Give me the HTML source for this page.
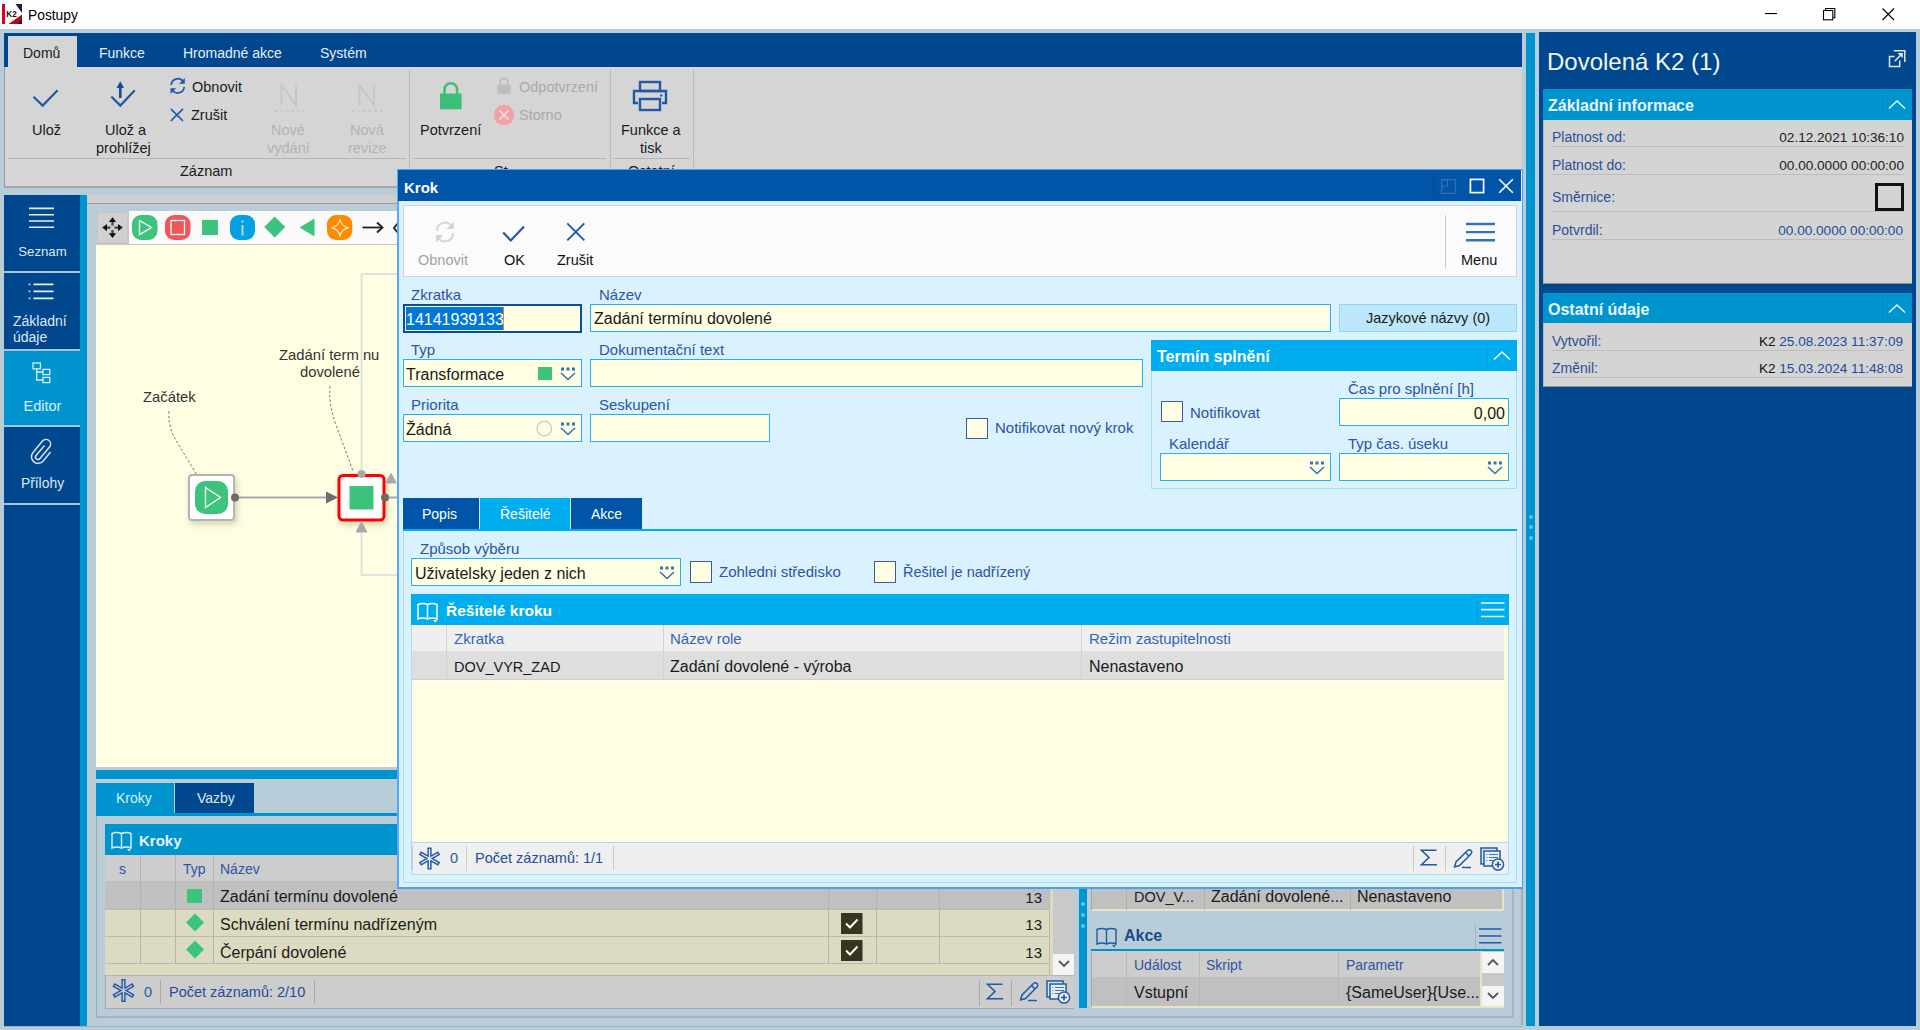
<!DOCTYPE html>
<html><head><meta charset="utf-8">
<style>
*{box-sizing:border-box;margin:0;padding:0}
html,body{width:1920px;height:1030px;overflow:hidden;background:#fff;font-family:"Liberation Sans",sans-serif;font-size:14px;color:#1a1a1a}
.a{position:absolute}
.t{position:absolute;white-space:nowrap;line-height:1}
svg{position:absolute;overflow:visible}
.lbl{color:#2f52a3;font-size:14px}
.inp{position:absolute;background:#fffee3;border:1px solid #1fb1f4}
.ws{color:#fff}
</style></head><body>
<!-- TITLE BAR -->
<div class="a" style="left:0;top:0;width:1920px;height:29px;background:#fff"></div>
<svg style="left:2px;top:4px" width="20" height="20" viewBox="0 0 20 20">
<rect x="0" y="0" width="20" height="20" fill="#fff"/>
<rect x="0" y="0" width="3" height="20" fill="#d0061e"/>
<path d="M13.5 0 H20 V9 Z" fill="#241a48"/>
<path d="M20 10.5 V20 H6.5 Z" fill="#b3091c"/>
<path d="M20 15 V20 H15 Z" fill="#4a0a20"/>
<text x="4.3" y="13.3" font-size="8.2" font-weight="bold" fill="#111" font-family="Liberation Sans">K2</text>
</svg>
<div class="t" style="left:28px;top:8.5px;font-size:13.8px;color:#000">Postupy</div>
<svg style="left:1765px;top:12.5px" width="12" height="2"><rect width="12" height="1.1" fill="#000"/></svg>
<svg style="left:1822px;top:7px" width="14" height="14" viewBox="0 0 14 14"><rect x="1.5" y="3.5" width="9.3" height="9.3" fill="none" stroke="#000" stroke-width="1.1"/><path d="M3.5 3.5 V1.5 H12.8 V10.8 H10.8" fill="none" stroke="#000" stroke-width="1.1"/></svg>
<svg style="left:1882px;top:8px" width="13" height="13" viewBox="0 0 13 13"><path d="M0.5 0.5 L12 12 M12 0.5 L0.5 12" stroke="#000" stroke-width="1.1"/></svg>

<!-- FRAME -->
<div class="a" style="left:0;top:29px;width:1920px;height:1001px;background:#b8cdd8"></div>

<!-- RIBBON -->
<div class="a" style="left:4px;top:33px;width:1518px;height:35px;background:#00478d"></div>
<div class="a" style="left:4px;top:67px;width:1518px;height:121px;background:#d5d5d5;border-left:1px solid #9a9a9a;border-bottom:2px solid #a0a6aa"></div>
<div class="a" style="left:8px;top:36px;width:69px;height:32px;background:#d5d5d5"></div>
<div class="t" style="left:23px;top:46px;font-size:14px;color:#1a1a1a">Domů</div>
<div class="t ws" style="left:99px;top:46px;font-size:14px;color:#e8eef5">Funkce</div>
<div class="t ws" style="left:183px;top:46px;font-size:14px;color:#e8eef5">Hromadné akce</div>
<div class="t ws" style="left:320px;top:46px;font-size:14px;color:#e8eef5">Systém</div>


<!-- RIBBON CONTENT -->
<svg style="left:32px;top:88px" width="28" height="20" viewBox="0 0 28 20"><path d="M1.5 8.8 L10.7 17.6 L25.6 2.3" fill="none" stroke="#1f5aa6" stroke-width="2.2"/></svg>
<div class="t" style="left:32px;top:123px;font-size:14.5px">Ulož</div>
<svg style="left:110px;top:80px" width="28" height="28" viewBox="0 0 28 28"><path d="M1.3 16.5 L10.3 25.6 L24.8 10.3" fill="none" stroke="#1f5aa6" stroke-width="2.2"/><path d="M10.3 18 V7" stroke="#0f4d9e" stroke-width="2.6"/><path d="M6.5 8 L10.3 1.2 L14.1 8 Z" fill="#0f4d9e"/></svg>
<div class="t" style="left:105px;top:123px;font-size:14.5px">Ulož a</div>
<div class="t" style="left:96px;top:141px;font-size:14.5px">prohlížej</div>
<svg style="left:169px;top:77px" width="18" height="18" viewBox="0 0 18 18"><path d="M2.2 8 A6.5 6.5 0 0 1 14 4.5" fill="none" stroke="#1f5aa6" stroke-width="1.8"/><path d="M15.8 1 V6.8 H10.2 Z" fill="#1f5aa6"/><path d="M15.2 10 A6.5 6.5 0 0 1 3.6 13.5" fill="none" stroke="#1f5aa6" stroke-width="1.8"/><path d="M1.5 17 V11.2 H7.1 Z" fill="#1f5aa6"/></svg>
<div class="t" style="left:192px;top:80px;font-size:14.5px">Obnovit</div>
<svg style="left:170px;top:108px" width="14" height="14" viewBox="0 0 14 14"><path d="M0.8 0.8 L13 13 M13 0.8 L0.8 13" stroke="#1f5aa6" stroke-width="1.7"/></svg>
<div class="t" style="left:191px;top:108px;font-size:14.5px">Zrušit</div>
<svg style="left:279px;top:84px" width="20" height="22" viewBox="0 0 20 22"><path d="M2.5 21 V1.5 L17 21 V1.5" fill="none" stroke="#c6c6c6" stroke-width="2"/></svg>
<svg style="left:275px;top:110px" width="30" height="2"><path d="M0 1 H30" stroke="#c3c3c3" stroke-width="1.6" stroke-dasharray="3 2.5"/></svg>
<div class="t" style="left:271px;top:123px;font-size:14.5px;color:#b3b3b3">Nové</div>
<div class="t" style="left:267px;top:141px;font-size:14.5px;color:#b3b3b3">vydání</div>
<svg style="left:357px;top:84px" width="20" height="22" viewBox="0 0 20 22"><path d="M2.5 21 V1.5 L17 21 V1.5" fill="none" stroke="#c6c6c6" stroke-width="2"/></svg>
<svg style="left:352px;top:110px" width="30" height="2"><path d="M0 1 H30" stroke="#c3c3c3" stroke-width="1.6" stroke-dasharray="3 2.5"/></svg>
<div class="t" style="left:350px;top:123px;font-size:14.5px;color:#b3b3b3">Nová</div>
<div class="t" style="left:348px;top:141px;font-size:14.5px;color:#b3b3b3">revize</div>
<div class="a" style="left:8px;top:158px;width:398px;height:1px;background:#b5b5b5"></div>
<div class="t" style="left:180px;top:164px;font-size:14.5px">Záznam</div>
<div class="a" style="left:409px;top:70px;width:1px;height:117px;background:#b8b8b8"></div>
<svg style="left:439px;top:81px" width="24" height="30" viewBox="0 0 24 30"><path d="M5.5 13 V8.5 A6.3 6.3 0 0 1 18.1 8.5 V13" fill="none" stroke="#3dbf78" stroke-width="2.6"/><rect x="1" y="12.5" width="21.6" height="15.8" fill="#3dbf78"/></svg>
<div class="t" style="left:420px;top:123px;font-size:14.5px">Potvrzení</div>
<svg style="left:496px;top:77px" width="16" height="18" viewBox="0 0 16 18"><path d="M4 8 V5.5 A4 4 0 0 1 12 5.5 V8" fill="none" stroke="#bdbdbd" stroke-width="1.8"/><rect x="1.3" y="7.5" width="13.4" height="9.6" fill="#bdbdbd"/></svg>
<div class="t" style="left:519px;top:80px;font-size:14.5px;color:#a9a9a9">Odpotvrzení</div>
<svg style="left:493px;top:104px" width="22" height="22" viewBox="0 0 22 22"><circle cx="11" cy="11" r="10.3" fill="#eea3a6"/><path d="M6.5 6.5 L15.5 15.5 M15.5 6.5 L6.5 15.5" stroke="#f7dcdd" stroke-width="1.6"/></svg>
<div class="t" style="left:519px;top:108px;font-size:14.5px;color:#a9a9a9">Storno</div>
<div class="a" style="left:413px;top:158px;width:193px;height:1px;background:#b5b5b5"></div>
<div class="t" style="left:494px;top:164px;font-size:14.5px">St</div>
<div class="a" style="left:610px;top:70px;width:1px;height:117px;background:#b8b8b8"></div>
<svg style="left:632px;top:80px" width="38" height="33" viewBox="0 0 38 33"><rect x="8" y="2" width="20" height="9" fill="none" stroke="#1f5aa6" stroke-width="2.4"/><path d="M6 23 H2 V11 H34 V23 H30" fill="none" stroke="#1f5aa6" stroke-width="2.4"/><rect x="8" y="19" width="20" height="11" fill="none" stroke="#1f5aa6" stroke-width="2.4"/><rect x="28" y="14.5" width="2.4" height="2" fill="#1f5aa6"/></svg>
<div class="t" style="left:621px;top:123px;font-size:14.5px">Funkce a</div>
<div class="t" style="left:640px;top:141px;font-size:14.5px">tisk</div>
<div class="a" style="left:613px;top:158px;width:77px;height:1px;background:#b5b5b5"></div>
<div class="t" style="left:628px;top:164px;font-size:14.5px">Ostatní</div>
<div class="a" style="left:693px;top:70px;width:1px;height:117px;background:#b8b8b8"></div>

<!-- LEFT NAV -->
<div class="a" style="left:4px;top:195px;width:76px;height:831px;background:#00478d"></div>
<div class="a" style="left:80px;top:195px;width:7px;height:831px;background:#0094cf"></div>

<!-- EDITOR AREA -->
<div class="a" style="left:87px;top:195px;width:1435px;height:9px;background:#cfcfcf;border-bottom:1px solid #9d9d9d"></div>


<!-- NAV ITEMS -->
<div class="a" style="left:4px;top:271px;width:76px;height:2px;background:#a9c3d6"></div>
<div class="a" style="left:4px;top:349px;width:76px;height:78px;background:#0094cf"></div>
<div class="a" style="left:4px;top:349px;width:76px;height:2px;background:#a9c3d6"></div>
<div class="a" style="left:4px;top:425px;width:76px;height:2px;background:#a9c3d6"></div>
<div class="a" style="left:4px;top:503px;width:76px;height:2px;background:#a9c3d6"></div>
<svg style="left:29px;top:206px" width="26" height="24" viewBox="0 0 26 24"><path d="M0 2.4 H25 M0 8.7 H25 M0 15 H25 M0 21.2 H25" stroke="#e6edf5" stroke-width="1.6"/></svg>
<div class="t" style="left:4px;width:77px;text-align:center;top:245.3px;font-size:13.2px;color:#dfe7f0">Seznam</div>
<svg style="left:28px;top:282px" width="27" height="20" viewBox="0 0 27 20"><path d="M5.5 2.4 H25.5 M5.5 9.4 H25.5 M5.5 16.4 H25.5" stroke="#e6edf5" stroke-width="1.6"/><rect x="0.7" y="1.6" width="1.6" height="1.6" fill="#e6edf5"/><rect x="0.7" y="8.6" width="1.6" height="1.6" fill="#e6edf5"/><rect x="0.7" y="15.6" width="1.6" height="1.6" fill="#e6edf5"/></svg>
<div class="t" style="left:13px;top:314px;font-size:14px;color:#dfe7f0">Základní</div>
<div class="t" style="left:13px;top:330px;font-size:14px;color:#dfe7f0">údaje</div>
<svg style="left:32px;top:362px" width="19" height="22" viewBox="0 0 19 22"><rect x="1" y="1" width="7.4" height="5.8" fill="none" stroke="#d8eef8" stroke-width="1.3"/><rect x="11" y="7.4" width="6.8" height="5.2" fill="none" stroke="#d8eef8" stroke-width="1.3"/><rect x="11" y="15.4" width="6.8" height="5.2" fill="none" stroke="#d8eef8" stroke-width="1.3"/><path d="M4.7 6.8 V18 H11 M4.7 10 H11" fill="none" stroke="#d8eef8" stroke-width="1.3"/></svg>
<div class="t" style="left:4px;width:77px;text-align:center;top:399px;font-size:14.5px;color:#dff0f8">Editor</div>
<svg style="left:30px;top:438px" width="24" height="26" viewBox="0 0 24 26"><path d="M14.5 7.5 L6 17.5 A2.5 2.5 0 0 0 10 20.5 L19.5 9 A4.6 4.6 0 0 0 12.5 3 L3 14.5 A6.6 6.6 0 0 0 13.2 23 L20.5 14" fill="none" stroke="#d6e2ee" stroke-width="1.5"/></svg>
<div class="t" style="left:4px;width:77px;text-align:center;top:476.5px;font-size:13.9px;color:#dfe7f0">Přílohy</div>

<!-- EDITOR TOOLBAR & CANVAS -->
<div class="a" style="left:96px;top:211px;width:302px;height:34px;background:#fafafa;border-bottom:1px solid #c8c8c8"></div>
<div class="a" style="left:96px;top:211px;width:33px;height:33px;background:#c7c7c7"></div>
<div class="a" style="left:98px;top:213px;width:29px;height:29px;background:#d0d0d0"></div>
<svg style="left:101px;top:216px" width="24" height="24" viewBox="0 0 24 24"><path d="M11.5 5 V9.5 M11.5 14 V18 M5 11.6 H9.5 M13.5 11.6 H18" stroke="#444" stroke-width="2.3"/><path d="M7.8 6 L11.5 1.2 L15.2 6 Z M7.8 17.2 L11.5 22 L15.2 17.2 Z M6 7.9 L1.2 11.6 L6 15.3 Z M17 7.9 L21.8 11.6 L17 15.3 Z" fill="#111"/></svg>
<svg style="left:132px;top:215px" width="26" height="26" viewBox="0 0 26 26"><rect x="0" y="0" width="25.5" height="25" rx="9" fill="#3dc47c"/><path d="M7.5 5.5 L19.5 12.5 L7.5 19.5 Z" fill="none" stroke="#fff" stroke-width="1.4"/></svg>
<svg style="left:165px;top:215px" width="26" height="26" viewBox="0 0 26 26"><rect x="0" y="0" width="25.5" height="25" rx="9" fill="#f45556"/><rect x="6" y="5.5" width="13.5" height="14" fill="#f45556" stroke="#fff" stroke-width="1.3"/></svg>
<div class="a" style="left:202px;top:220px;width:16px;height:15px;background:#3dc47c"></div>
<svg style="left:230px;top:215px" width="26" height="26" viewBox="0 0 26 26"><rect x="0" y="0" width="25" height="25" rx="9" fill="#03a0e3"/><rect x="11.5" y="5.5" width="2" height="2" fill="#a9defa"/><rect x="11.5" y="10" width="2" height="10.5" fill="#a9defa"/></svg>
<svg style="left:264px;top:216px" width="22" height="22" viewBox="0 0 22 22"><path d="M10.7 0.5 L21.3 11 L10.7 21.5 L0.2 11 Z" fill="#3dc47c"/></svg>
<svg style="left:299px;top:218px" width="17" height="19" viewBox="0 0 17 19"><path d="M15.5 0.5 V18.5 L0.5 9.5 Z" fill="#3dc47c"/></svg>
<svg style="left:327px;top:215px" width="26" height="26" viewBox="0 0 26 26"><rect x="0" y="0" width="25.3" height="25" rx="9" fill="#ff8a00"/><path d="M13 4 C13.5 8.5, 17 12, 21.7 12.8 C17 13.6, 13.5 17, 13 21.5 C12.5 17, 9 13.6, 4.3 12.8 C9 12, 12.5 8.5, 13 4 Z" fill="none" stroke="#ffe9d2" stroke-width="1.3"/></svg>
<svg style="left:362px;top:221px" width="22" height="13" viewBox="0 0 22 13"><path d="M0.5 6.5 H20" stroke="#222" stroke-width="1.8"/><path d="M15 1.5 L20.5 6.5 L15 11.5" fill="none" stroke="#222" stroke-width="1.9"/></svg>
<svg style="left:393px;top:222px" width="6" height="12" viewBox="0 0 6 12"><path d="M5 1 L1 6 L5 11" fill="none" stroke="#222" stroke-width="1.9"/></svg>
<div class="a" style="left:96px;top:245px;width:302px;height:522px;background:#fffee3"></div>
<!-- diagram -->
<svg style="left:96px;top:245px" width="302" height="522" viewBox="96 245 302 522">
<path d="M361.5 274 H398 M361.5 274 V470 M361.5 532 V575 H398" fill="none" stroke="#e2e2dc" stroke-width="2"/>
<path d="M169 411 C168 425, 172 432, 174 437 L197 475" fill="none" stroke="#777" stroke-width="1" stroke-dasharray="2.5 2"/>
<path d="M330 386 C329 400, 331 410, 336 425 L353 471" fill="none" stroke="#777" stroke-width="1" stroke-dasharray="2.5 2"/>
<rect x="189" y="475" width="45" height="45" rx="3" fill="#fff" stroke="#b4b4b4" stroke-width="2" style="filter:drop-shadow(2px 3px 3px rgba(120,120,80,0.35))"/>
<rect x="195" y="481" width="33" height="33" rx="10" fill="#3dc47c"/>
<path d="M205.5 487.5 L220.5 497.5 L205.5 507.5 Z" fill="none" stroke="#fff" stroke-width="1.4"/>
<path d="M239 497.5 H327" stroke="#a9a9a9" stroke-width="2"/>
<circle cx="235" cy="497.5" r="4" fill="#6b6b6b"/>
<path d="M326 491.5 L338 497.5 L326 503.5 Z" fill="#6b6b6b"/>
<rect x="339" y="475.5" width="45" height="44.5" rx="4" fill="#fff" stroke="#ff0000" stroke-width="3" style="filter:drop-shadow(2px 3px 3px rgba(120,120,80,0.35))"/>
<rect x="349.5" y="486" width="24" height="23.5" fill="#3dc47c"/>
<circle cx="361.5" cy="474" r="4" fill="#a9a9a9"/>
<circle cx="385" cy="497.5" r="4" fill="#6b6b6b"/>
<path d="M389 497.5 H398" stroke="#a9a9a9" stroke-width="2"/>
<path d="M385 483.5 L391 472.5 L397 483.5 Z" fill="#a9a9a9"/>
<path d="M355.5 532.5 L361.5 520.5 L367.5 532.5 Z" fill="#a9a9a9"/>
</svg>
<div class="t" style="left:143px;top:390px;font-size:14.8px;color:#333">Začátek</div>
<div class="t" style="left:279px;top:348px;font-size:14.8px;color:#333">Zadání term nu</div>
<div class="t" style="left:300px;top:365px;font-size:14.8px;color:#333">dovolené</div>

<!-- RIGHT SPLIT BAR -->
<div class="a" style="left:1526px;top:33px;width:9px;height:993px;background:#0094cf"></div>

<div class="a" style="left:1528.5px;top:514.5px;width:4px;height:4px;border-radius:50%;background:#4fc8f5"></div>
<div class="a" style="left:1528.5px;top:525px;width:4px;height:4px;border-radius:50%;background:#4fc8f5"></div>
<div class="a" style="left:1528.5px;top:535.5px;width:4px;height:4px;border-radius:50%;background:#4fc8f5"></div>
<!-- RIGHT PANEL -->
<div class="a" style="left:1539px;top:32px;width:377px;height:994px;background:#00478d"></div>


<!-- BOTTOM AREA -->
<div class="a" style="left:96px;top:770px;width:1426px;height:9px;background:#0094cf"></div>
<div class="a" style="left:96px;top:783px;width:78px;height:32px;background:#0094cf"></div>
<div class="a" style="left:175px;top:783px;width:79px;height:32px;background:#00478d"></div>
<div class="t" style="left:116px;top:791px;font-size:14px;color:#d8eef8">Kroky</div>
<div class="t" style="left:197px;top:791px;font-size:14px;color:#dce6f0">Vazby</div>
<div class="a" style="left:96px;top:813px;width:1426px;height:3px;background:#0094cf"></div>
<div class="a" style="left:96px;top:816px;width:1418px;height:202px;border-left:1px solid #9aa8b0;border-right:2px solid #a7b4bb;border-bottom:2px solid #a7b4bb"></div>
<div class="a" style="left:4px;top:1026px;width:1518px;height:1px;background:#a3afb5"></div>
<!-- Kroky grid -->
<div class="a" style="left:105px;top:824px;width:969px;height:31px;background:#0094cf"></div>
<svg style="left:111px;top:831px" width="22" height="21" viewBox="0 0 22 21"><path d="M1 2.5 C4 1.2, 7.5 1.2, 10.5 2.5 V17 C7.5 15.8, 4 15.8, 1 17 Z M10.5 2.5 C13.5 1.2, 17 1.2, 20 2.5 V17 C17 15.8, 13.5 15.8, 10.5 17" fill="none" stroke="#dff2fa" stroke-width="1.4"/><path d="M16 18 L20 18 L18 20.5 Z" fill="#dff2fa"/></svg>
<div class="t" style="left:139px;top:833px;font-size:15px;font-weight:bold;color:#e6f4fa">Kroky</div>
<div class="a" style="left:105px;top:855px;width:945px;height:26px;background:#cdcdcd"></div>
<div class="a" style="left:105px;top:881px;width:945px;height:29px;background:#c0c0c0"></div>
<div class="a" style="left:105px;top:910px;width:945px;height:65px;background:#dcdac0"></div>
<div class="a" style="left:105px;top:909px;width:945px;height:1px;background:#b9b9ad"></div>
<div class="a" style="left:105px;top:936px;width:945px;height:1px;background:#b9b9ad"></div>
<div class="a" style="left:105px;top:963px;width:945px;height:1px;background:#b9b9ad"></div>
<div class="a" style="left:140px;top:855px;width:1px;height:109px;background:#b3b3b3"></div>
<div class="a" style="left:175px;top:855px;width:1px;height:109px;background:#b3b3b3"></div>
<div class="a" style="left:213px;top:855px;width:1px;height:109px;background:#b3b3b3"></div>
<div class="a" style="left:828px;top:881px;width:1px;height:83px;background:#b3b3b3"></div>
<div class="a" style="left:876px;top:881px;width:1px;height:83px;background:#b3b3b3"></div>
<div class="a" style="left:939px;top:881px;width:1px;height:83px;background:#b3b3b3"></div>
<div class="t lbl" style="left:119px;top:862px;font-size:14px">s</div>
<div class="t lbl" style="left:183px;top:862px;font-size:14px">Typ</div>
<div class="t lbl" style="left:220px;top:862px;font-size:14px">Název</div>
<div class="a" style="left:187px;top:889px;width:15px;height:14px;background:#3dc47c"></div>
<svg style="left:185px;top:913px" width="20" height="20" viewBox="0 0 20 20"><path d="M10 0.5 L19 9.5 L10 18.5 L1 9.5 Z" fill="#3dc47c"/></svg>
<svg style="left:185px;top:940px" width="20" height="20" viewBox="0 0 20 20"><path d="M10 0.5 L19 9.5 L10 18.5 L1 9.5 Z" fill="#3dc47c"/></svg>
<div class="t" style="left:220px;top:889px;font-size:16px;color:#1a1a1a">Zadání termínu dovolené</div>
<div class="t" style="left:220px;top:917px;font-size:16px;color:#1a1a1a">Schválení termínu nadřízeným</div>
<div class="t" style="left:220px;top:945px;font-size:16px;color:#1a1a1a">Čerpání dovolené</div>
<svg style="left:841px;top:913px" width="22" height="21" viewBox="0 0 22 21"><rect width="21.5" height="21" fill="#38341f"/><path d="M5 10.5 L9 14.5 L16.5 6.5" fill="none" stroke="#fff" stroke-width="2"/></svg>
<svg style="left:841px;top:940px" width="22" height="21" viewBox="0 0 22 21"><rect width="21.5" height="21" fill="#38341f"/><path d="M5 10.5 L9 14.5 L16.5 6.5" fill="none" stroke="#fff" stroke-width="2"/></svg>
<div class="t" style="right:878px;top:890px;font-size:15px">13</div>
<div class="t" style="right:878px;top:917px;font-size:15px">13</div>
<div class="t" style="right:878px;top:945px;font-size:15px">13</div>
<div class="a" style="left:1049px;top:855px;width:4px;height:120px;background:#dcdac0;border-left:1px solid #b9b9ad"></div>
<div class="a" style="left:1053px;top:882px;width:21px;height:29px;background:#d2d2d2;border-left:1px solid #f4f4f4;border-right:1px solid #e8e8e8"></div>
<div class="a" style="left:1053px;top:855px;width:21px;height:120px;background:#c9c9c9"></div>
<div class="a" style="left:1053px;top:954px;width:21px;height:21px;background:#f4f4f4"></div>
<svg style="left:1057px;top:959px" width="14" height="10" viewBox="0 0 14 10"><path d="M2 2 L7 7 L12 2" fill="none" stroke="#555" stroke-width="1.8"/></svg>
<div class="a" style="left:105px;top:975px;width:969px;height:34px;background:#cdcdcd;border-top:1px solid #b0b8bc;border-left:1px solid #a0a0a0;border-bottom:1px solid #9fabb1"></div>
<svg style="left:113px;top:980px" width="21" height="21" viewBox="0 0 21 21"><path d="M10.5 1 V20 M2.3 5.75 L18.7 15.25 M2.3 15.25 L18.7 5.75" stroke="#1f5aa6" stroke-width="4.2" stroke-linecap="square"/><path d="M10.5 1 V20 M2.3 5.75 L18.7 15.25 M2.3 15.25 L18.7 5.75" stroke="#cdcdcd" stroke-width="1.4" stroke-linecap="round"/></svg>
<div class="t" style="left:144px;top:985px;font-size:14.5px;color:#1f5aa6">0</div>
<div class="a" style="left:160px;top:980px;width:1px;height:24px;background:#aaa"></div>
<div class="t" style="left:169px;top:985px;font-size:14.5px;color:#1f4c9c">Počet záznamů: 2/10</div>
<div class="a" style="left:314px;top:980px;width:1px;height:24px;background:#aaa"></div>
<div class="a" style="left:979px;top:980px;width:1px;height:26px;background:#aaa"></div>
<div class="a" style="left:1011px;top:980px;width:1px;height:26px;background:#aaa"></div>
<svg style="left:986px;top:983px" width="18" height="18" viewBox="0 0 18 18"><path d="M16.5 1.3 H1.5 L9 8.5 L1.5 15.8 H17" fill="none" stroke="#1f5aa6" stroke-width="1.6" stroke-linejoin="miter"/></svg>
<svg style="left:1019px;top:982px" width="20" height="20" viewBox="0 0 20 20"><path d="M1.5 18 L3 13 L14.5 1.5 A2 2 0 0 1 18 5 L6.5 16.5 Z M12.5 3.5 L16 7" fill="none" stroke="#1f5aa6" stroke-width="1.5"/><path d="M9 18.5 H18" stroke="#1f5aa6" stroke-width="1.5"/></svg>
<svg style="left:1046px;top:980px" width="26" height="26" viewBox="0 0 26 26"><rect x="1" y="1" width="16" height="16" fill="#d9e6f4" stroke="#1f5aa6" stroke-width="1.5"/><rect x="4" y="4" width="16" height="15" fill="#e8eef5" stroke="#1f5aa6" stroke-width="1.5"/><path d="M9 7.5 H18 M9 10.5 H18 M9 13.5 H13" stroke="#3f76b9" stroke-width="1.2"/><path d="M6.5 7.5 H7.5 M6.5 10.5 H7.5 M6.5 13.5 H7.5" stroke="#3f76b9" stroke-width="1.2"/><circle cx="18" cy="17.5" r="5.6" fill="#eef2f6" stroke="#1f5aa6" stroke-width="1.5"/><path d="M18 14.5 V20.5 M15 17.5 H21" stroke="#1f5aa6" stroke-width="1.7"/></svg>
<!-- vertical splitter -->
<div class="a" style="left:1079px;top:824px;width:8px;height:184px;background:#0094cf"></div>
<div class="a" style="left:1081px;top:902px;width:4px;height:4px;border-radius:50%;background:#52cbf7"></div>
<div class="a" style="left:1081px;top:913px;width:4px;height:4px;border-radius:50%;background:#52cbf7"></div>
<div class="a" style="left:1081px;top:924px;width:4px;height:4px;border-radius:50%;background:#52cbf7"></div>
<!-- right upper grid (Resitele) -->
<div class="a" style="left:1091px;top:870px;width:413px;height:41px;background:#c0c0c0;border-left:1px solid #a6a6a6;border-bottom:2px solid #e6e3c8;border-right:2px solid #e6e3c8"></div>
<div class="a" style="left:1126px;top:870px;width:1px;height:40px;background:#b0b0b0"></div>
<div class="a" style="left:1204px;top:870px;width:1px;height:40px;background:#b0b0b0"></div>
<div class="a" style="left:1350px;top:870px;width:1px;height:40px;background:#b0b0b0"></div>
<div class="t" style="left:1134px;top:890px;font-size:14.5px">DOV_V...</div>
<div class="t" style="left:1211px;top:889px;font-size:16px">Zadání dovolené...</div>
<div class="t" style="left:1357px;top:889px;font-size:16px">Nenastaveno</div>
<!-- Akce -->
<svg style="left:1096px;top:927px" width="22" height="21" viewBox="0 0 22 21"><path d="M1 2.5 C4 1.2, 7.5 1.2, 10.5 2.5 V17 C7.5 15.8, 4 15.8, 1 17 Z M10.5 2.5 C13.5 1.2, 17 1.2, 20 2.5 V17 C17 15.8, 13.5 15.8, 10.5 17" fill="none" stroke="#1f5aa6" stroke-width="1.4"/><path d="M16 18 L20 18 L18 20.5 Z" fill="#1f5aa6"/></svg>
<div class="t" style="left:1124px;top:927.5px;font-size:16px;font-weight:bold;color:#1a4a8e">Akce</div>
<div class="a" style="left:1475px;top:924px;width:1px;height:25px;background:#9fb4c2"></div>
<svg style="left:1479px;top:927px" width="23" height="18" viewBox="0 0 23 18"><path d="M0 2 H22.5 M0 9 H22.5 M0 15.8 H22.5" stroke="#1f5aa6" stroke-width="1.6"/></svg>
<div class="a" style="left:1091px;top:949px;width:413px;height:2px;background:#0094cf"></div>
<div class="a" style="left:1091px;top:951px;width:413px;height:57px;background:#cdcdcd;border-left:1px solid #a6a6a6;border-bottom:2px solid #e6e3c8"></div>
<div class="a" style="left:1092px;top:977px;width:390px;height:29px;background:#c0c0c0"></div>
<div class="a" style="left:1126px;top:951px;width:1px;height:55px;background:#b8b8b8"></div>
<div class="a" style="left:1199px;top:951px;width:1px;height:55px;background:#b8b8b8"></div>
<div class="a" style="left:1338px;top:951px;width:1px;height:55px;background:#b8b8b8"></div>
<div class="t lbl" style="left:1134px;top:958px;font-size:14px">Událost</div>
<div class="t lbl" style="left:1206px;top:958px;font-size:14px">Skript</div>
<div class="t lbl" style="left:1346px;top:958px;font-size:14px">Parametr</div>
<div class="t" style="left:1134px;top:985px;font-size:16px">Vstupní</div>
<div class="t" style="left:1346px;top:985px;font-size:16px">{SameUser}{Use...</div>
<div class="a" style="left:1480px;top:951px;width:2px;height:55px;background:#e6e3c8"></div>
<div class="a" style="left:1482px;top:951px;width:22px;height:55px;background:#c9c9c9"></div>
<div class="a" style="left:1482px;top:952px;width:22px;height:21px;background:#f4f4f4"></div>
<div class="a" style="left:1482px;top:986px;width:22px;height:20px;background:#f4f4f4"></div>
<svg style="left:1486px;top:957px" width="14" height="10" viewBox="0 0 14 10"><path d="M2 8 L7 3 L12 8" fill="none" stroke="#555" stroke-width="1.8"/></svg>
<svg style="left:1486px;top:991px" width="14" height="10" viewBox="0 0 14 10"><path d="M2 2 L7 7 L12 2" fill="none" stroke="#555" stroke-width="1.8"/></svg>

<!-- RIGHT INFO PANEL CONTENT -->
<div class="t" style="left:1547px;top:50px;font-size:24px;color:#f2f6fa">Dovolená K2 (1)</div>
<svg style="left:1880px;top:45px" width="30" height="26" viewBox="1880 45 30 26"><path d="M1894.5 56.5 H1889.5 V66.5 H1899.7 V60.5" fill="none" stroke="#e2e8ef" stroke-width="1.5"/><path d="M1893.8 50.7 H1904.8 V62" fill="none" stroke="#e2e8ef" stroke-width="1.5"/><path d="M1894.7 61.2 L1902 53.8" stroke="#e2e8ef" stroke-width="1.5"/><path d="M1897.5 53 H1902.8 V58.3 Z" fill="#e2e8ef"/></svg>
<div class="a" style="left:1543px;top:89px;width:369px;height:31px;background:#0094cf"></div>
<div class="t" style="left:1548px;top:98px;font-size:16px;font-weight:bold;color:#eaf5fb">Základní informace</div>
<div class="a" style="left:1882px;top:92px;width:1px;height:26px;background:#0a86bd"></div>
<svg style="left:1888px;top:99px" width="18" height="11" viewBox="0 0 18 11"><path d="M1 9.5 L9 2 L17 9.5" fill="none" stroke="#e8f4fa" stroke-width="1.5"/></svg>
<div class="a" style="left:1543px;top:120px;width:369px;height:164px;background:#d4d4d4;border-bottom:1px solid #8f8f8f;border-left:1px solid #b9b9b9"></div>
<div class="a" style="left:1551px;top:146px;width:353px;height:1px;background:#bdbdbd"></div>
<div class="a" style="left:1551px;top:174px;width:353px;height:1px;background:#bdbdbd"></div>
<div class="a" style="left:1551px;top:211px;width:353px;height:1px;background:#bdbdbd"></div>
<div class="a" style="left:1551px;top:239px;width:353px;height:1px;background:#bdbdbd"></div>
<div class="t lbl" style="left:1552px;top:130px;font-size:14px;color:#2a4f96">Platnost od:</div>
<div class="t lbl" style="left:1552px;top:158px;font-size:14px;color:#2a4f96">Platnost do:</div>
<div class="t lbl" style="left:1552px;top:190px;font-size:14px;color:#2a4f96">Směrnice:</div>
<div class="t lbl" style="left:1552px;top:223px;font-size:14px;color:#2a4f96">Potvrdil:</div>
<div class="t" style="right:16px;top:131px;font-size:13.6px;color:#222">02.12.2021 10:36:10</div>
<div class="t" style="right:16px;top:159px;font-size:13.6px;color:#222">00.00.0000 00:00:00</div>
<div class="a" style="left:1875px;top:183px;width:29px;height:28px;border:3.5px solid #111"></div>
<div class="t" style="right:17px;top:224px;font-size:13.6px;color:#1f4c9c">00.00.0000 00:00:00</div>
<div class="a" style="left:1543px;top:293px;width:369px;height:30px;background:#0094cf"></div>
<div class="t" style="left:1548px;top:302px;font-size:16px;font-weight:bold;color:#eaf5fb">Ostatní údaje</div>
<div class="a" style="left:1882px;top:296px;width:1px;height:26px;background:#0a86bd"></div>
<svg style="left:1888px;top:303px" width="18" height="11" viewBox="0 0 18 11"><path d="M1 9.5 L9 2 L17 9.5" fill="none" stroke="#e8f4fa" stroke-width="1.5"/></svg>
<div class="a" style="left:1543px;top:323px;width:369px;height:64px;background:#d4d4d4;border-bottom:1px solid #8f8f8f;border-left:1px solid #b9b9b9"></div>
<div class="a" style="left:1551px;top:350px;width:353px;height:1px;background:#bdbdbd"></div>
<div class="a" style="left:1551px;top:377px;width:353px;height:1px;background:#bdbdbd"></div>
<div class="t lbl" style="left:1552px;top:334px;font-size:14px;color:#2a4f96">Vytvořil:</div>
<div class="t lbl" style="left:1552px;top:361px;font-size:14px;color:#2a4f96">Změnil:</div>
<div class="t" style="right:17px;top:335px;font-size:13.6px;color:#111">K2 <span style="color:#1f4c9c">25.08.2023 11:37:09</span></div>
<div class="t" style="right:17px;top:362px;font-size:13.6px;color:#111">K2 <span style="color:#1f4c9c">15.03.2024 11:48:08</span></div>

<!-- DIALOG -->
<div class="a" style="left:1521px;top:187px;width:2px;height:838px;background:#a4adb3"></div>
<div class="a" style="left:397px;top:169px;width:1126px;height:720px;background:#d9f2fd;border:1px solid #4a9ef8;border-left:2px solid #55a9fb;border-bottom:2px solid #4a9ef8"></div>
<div class="a" style="left:398px;top:170px;width:1123px;height:31px;background:#0055a8"></div>
<div class="t" style="left:404px;top:180px;font-size:15px;font-weight:bold;color:#fff">Krok</div>
<div class="a" style="left:1433px;top:173px;width:1px;height:26px;background:#0a4b94"></div>
<svg style="left:1441px;top:179px" width="15" height="15" viewBox="0 0 15 15"><rect x="0.7" y="0.7" width="13.6" height="13.6" fill="none" stroke="#3a6fb0" stroke-width="1.2"/><path d="M0.7 7 H6.5 V0.7" fill="none" stroke="#3a6fb0" stroke-width="1.2"/></svg>
<svg style="left:1469px;top:178px" width="16" height="16" viewBox="0 0 16 16"><rect x="1.4" y="1.4" width="13.2" height="13.2" fill="none" stroke="#fff" stroke-width="1.7"/></svg>
<svg style="left:1498px;top:178px" width="16" height="16" viewBox="0 0 16 16"><path d="M1.2 1.2 L14.8 14.8 M14.8 1.2 L1.2 14.8" stroke="#fff" stroke-width="1.6"/></svg>
<!-- toolbar -->
<div class="a" style="left:403px;top:205px;width:1114px;height:72px;background:#fbfbfb;border:1px solid #d2d2d2"></div>
<svg style="left:434px;top:220px" width="22" height="24" viewBox="0 0 22 24"><path d="M3 11 A8 8 0 0 1 17.5 6" fill="none" stroke="#d4d4d4" stroke-width="2"/><path d="M20 1.5 V9 H12.5 Z" fill="#d4d4d4"/><path d="M19 13 A8 8 0 0 1 4.5 18" fill="none" stroke="#d4d4d4" stroke-width="2"/><path d="M2 22.5 V15 H9.5 Z" fill="#d4d4d4"/></svg>
<div class="t" style="left:418px;top:253px;font-size:14.5px;color:#a3a3a3">Obnovit</div>
<svg style="left:502px;top:225px" width="24" height="18" viewBox="0 0 24 18"><path d="M1.2 7.5 L8.8 15.5 L22 1.5" fill="none" stroke="#1f5aa6" stroke-width="2.2"/></svg>
<div class="t" style="left:504px;top:253px;font-size:14.5px;color:#111">OK</div>
<svg style="left:566px;top:222px" width="20" height="20" viewBox="0 0 20 20"><path d="M1.3 1.3 L18.3 18.3 M18.3 1.3 L1.3 18.3" stroke="#1f5aa6" stroke-width="1.9"/></svg>
<div class="t" style="left:557px;top:253px;font-size:14.5px;color:#111">Zrušit</div>
<div class="a" style="left:1445px;top:215px;width:1px;height:53px;background:#cdcdcd"></div>
<svg style="left:1466px;top:222px" width="30" height="20" viewBox="0 0 30 20"><path d="M0 2 H29 M0 10.1 H29 M0 18.2 H29" stroke="#3573b9" stroke-width="2.4"/></svg>
<div class="t" style="left:1461px;top:253px;font-size:14.5px;color:#111">Menu</div>
<!-- form -->
<div class="t lbl" style="left:411px;top:287px;font-size:15px">Zkratka</div>
<div class="t lbl" style="left:599px;top:287px;font-size:15px">Název</div>
<div class="a" style="left:403px;top:304px;width:179px;height:29px;background:#fffee3;border:2px solid #0a4e9e"></div>
<div class="a" style="left:406px;top:307px;width:97px;height:23px;background:#0078d7"></div>
<div class="a" style="left:503px;top:307px;width:1px;height:23px;background:#e0802a"></div>
<div class="t" style="left:406px;top:312px;font-size:16px;color:#fff">14141939133</div>
<div class="inp" style="left:590px;top:304px;width:741px;height:28px"></div>
<div class="t" style="left:594px;top:311px;font-size:16px">Zadání termínu dovolené</div>
<div class="a" style="left:1339px;top:304px;width:178px;height:28px;background:#bde8fb;border:1px solid #8fd5f7"></div>
<div class="t" style="left:1366px;top:311px;font-size:14.5px">Jazykové názvy (0)</div>
<div class="t lbl" style="left:411px;top:342px;font-size:15px">Typ</div>
<div class="t lbl" style="left:599px;top:342px;font-size:15px">Dokumentační text</div>
<div class="inp" style="left:403px;top:359px;width:179px;height:28px"></div>
<div class="t" style="left:406px;top:367px;font-size:16px">Transformace</div>
<div class="a" style="left:538px;top:367px;width:14px;height:13px;background:#3dc47c"></div>
<svg class="dd" style="left:560px;top:367px" width="16" height="14" viewBox="0 0 16 14"><rect x="1" y="0.5" width="3" height="3" fill="#3573b9"/><rect x="6.5" y="0.5" width="3" height="3" fill="#3573b9"/><rect x="12" y="0.5" width="3" height="3" fill="#3573b9"/><path d="M1 6 L8 12.5 L15 6" fill="none" stroke="#3573b9" stroke-width="1.6"/></svg>
<div class="inp" style="left:590px;top:359px;width:553px;height:28px"></div>
<div class="t lbl" style="left:411px;top:397px;font-size:15px">Priorita</div>
<div class="t lbl" style="left:599px;top:397px;font-size:15px">Seskupení</div>
<div class="inp" style="left:403px;top:414px;width:179px;height:28px"></div>
<div class="t" style="left:406px;top:422px;font-size:16px">Žádná</div>
<svg style="left:536px;top:420px" width="17" height="17" viewBox="0 0 17 17"><circle cx="8.3" cy="8.5" r="7.3" fill="none" stroke="#cfcfcf" stroke-width="1.5"/></svg>
<svg style="left:560px;top:422px" width="16" height="14" viewBox="0 0 16 14"><rect x="1" y="0.5" width="3" height="3" fill="#3573b9"/><rect x="6.5" y="0.5" width="3" height="3" fill="#3573b9"/><rect x="12" y="0.5" width="3" height="3" fill="#3573b9"/><path d="M1 6 L8 12.5 L15 6" fill="none" stroke="#3573b9" stroke-width="1.6"/></svg>
<div class="inp" style="left:590px;top:414px;width:180px;height:28px"></div>
<div class="a" style="left:966px;top:418px;width:22px;height:21px;background:#fffee3;border:1.5px solid #3a5b9c"></div>
<div class="t lbl" style="left:995px;top:420px;font-size:15px">Notifikovat nový krok</div>
<!-- Termin splneni -->
<div class="a" style="left:1151px;top:340px;width:366px;height:149px;border:1px solid #a3def8"></div>
<div class="a" style="left:1151px;top:340px;width:366px;height:31px;background:#00adef"></div>
<div class="t" style="left:1157px;top:349px;font-size:16px;font-weight:bold;color:#fff">Termín splnění</div>
<div class="a" style="left:1486px;top:343px;width:1px;height:27px;background:#0a9ad6"></div>
<svg style="left:1493px;top:350px" width="18" height="11" viewBox="0 0 18 11"><path d="M1 9.5 L9 2 L17 9.5" fill="none" stroke="#fff" stroke-width="1.5"/></svg>
<div class="t lbl" style="left:1348px;top:381px;font-size:15px">Čas pro splnění [h]</div>
<div class="a" style="left:1161px;top:401px;width:22px;height:21px;background:#fffee3;border:1.5px solid #3a5b9c"></div>
<div class="t lbl" style="left:1190px;top:405px;font-size:15px">Notifikovat</div>
<div class="inp" style="left:1339px;top:398px;width:170px;height:28px"></div>
<div class="t" style="right:415px;top:406px;font-size:16px">0,00</div>
<div class="t lbl" style="left:1169px;top:436px;font-size:15px">Kalendář</div>
<div class="t lbl" style="left:1348px;top:436px;font-size:15px">Typ čas. úseku</div>
<div class="inp" style="left:1160px;top:453px;width:171px;height:28px"></div>
<svg style="left:1309px;top:461px" width="16" height="14" viewBox="0 0 16 14"><rect x="1" y="0.5" width="3" height="3" fill="#3573b9"/><rect x="6.5" y="0.5" width="3" height="3" fill="#3573b9"/><rect x="12" y="0.5" width="3" height="3" fill="#3573b9"/><path d="M1 6 L8 12.5 L15 6" fill="none" stroke="#3573b9" stroke-width="1.6"/></svg>
<div class="inp" style="left:1339px;top:453px;width:170px;height:28px"></div>
<svg style="left:1487px;top:461px" width="16" height="14" viewBox="0 0 16 14"><rect x="1" y="0.5" width="3" height="3" fill="#3573b9"/><rect x="6.5" y="0.5" width="3" height="3" fill="#3573b9"/><rect x="12" y="0.5" width="3" height="3" fill="#3573b9"/><path d="M1 6 L8 12.5 L15 6" fill="none" stroke="#3573b9" stroke-width="1.6"/></svg>
<!-- tabs -->
<div class="a" style="left:403px;top:498px;width:76px;height:31px;background:#0055a8"></div>
<div class="a" style="left:480px;top:498px;width:90px;height:31px;background:#00adef"></div>
<div class="a" style="left:571px;top:498px;width:71px;height:31px;background:#0055a8"></div>
<div class="t" style="left:422px;top:507px;font-size:14px;color:#fff">Popis</div>
<div class="t" style="left:500px;top:507px;font-size:14px;color:#fff">Řešitelé</div>
<div class="t" style="left:591px;top:507px;font-size:14px;color:#fff">Akce</div>
<div class="a" style="left:403px;top:529px;width:1114px;height:2px;background:#00adef"></div>
<div class="a" style="left:403px;top:531px;width:1px;height:352px;background:#a3def8"></div>
<div class="a" style="left:403px;top:882px;width:1114px;height:1px;background:#a3def8"></div>
<div class="a" style="left:1516px;top:531px;width:1px;height:352px;background:#a3def8"></div>
<!-- resitele content -->
<div class="t lbl" style="left:420px;top:541px;font-size:15px">Způsob výběru</div>
<div class="inp" style="left:411px;top:558px;width:270px;height:28px"></div>
<div class="t" style="left:415px;top:566px;font-size:16px">Uživatelsky jeden z nich</div>
<svg style="left:659px;top:566px" width="16" height="14" viewBox="0 0 16 14"><rect x="1" y="0.5" width="3" height="3" fill="#3573b9"/><rect x="6.5" y="0.5" width="3" height="3" fill="#3573b9"/><rect x="12" y="0.5" width="3" height="3" fill="#3573b9"/><path d="M1 6 L8 12.5 L15 6" fill="none" stroke="#3573b9" stroke-width="1.6"/></svg>
<div class="a" style="left:690px;top:561px;width:22px;height:22px;background:#fffee3;border:1.5px solid #3a5b9c"></div>
<div class="t lbl" style="left:719px;top:564px;font-size:15px">Zohledni středisko</div>
<div class="a" style="left:874px;top:561px;width:22px;height:22px;background:#fffee3;border:1.5px solid #3a5b9c"></div>
<div class="t lbl" style="left:903px;top:564.5px;font-size:14.5px">Řešitel je nadřízený</div>
<!-- grid -->
<div class="a" style="left:411px;top:594px;width:1098px;height:281px;background:#fffee3;border:1px solid #a3def8"></div>
<div class="a" style="left:411px;top:594px;width:1098px;height:31px;background:#00adef"></div>
<svg style="left:417px;top:602px" width="22" height="21" viewBox="0 0 22 21"><path d="M1 2.5 C4 1.2, 7.5 1.2, 10.5 2.5 V17 C7.5 15.8, 4 15.8, 1 17 Z M10.5 2.5 C13.5 1.2, 17 1.2, 20 2.5 V17 C17 15.8, 13.5 15.8, 10.5 17" fill="none" stroke="#fff" stroke-width="1.5"/><path d="M16 18 L20.5 18 L18.2 20.5 Z" fill="#fff"/></svg>
<div class="t" style="left:446px;top:603px;font-size:15.5px;font-weight:bold;color:#fff">Řešitelé kroku</div>
<div class="a" style="left:1477px;top:597px;width:1px;height:26px;background:#0a9ad6"></div>
<svg style="left:1481px;top:601px" width="24" height="18" viewBox="0 0 24 18"><path d="M0 2 H23.5 M0 8.7 H23.5 M0 15.5 H23.5" stroke="#e8f6fc" stroke-width="1.7"/></svg>
<div class="a" style="left:412px;top:625px;width:1092px;height:26px;background:#efefef"></div>
<div class="a" style="left:412px;top:651px;width:1092px;height:28px;background:#dedede"></div>
<div class="a" style="left:412px;top:679px;width:1092px;height:1px;background:#d0d0c4"></div>
<div class="a" style="left:446px;top:625px;width:1px;height:54px;background:#d2d2d2"></div>
<div class="a" style="left:663px;top:625px;width:1px;height:54px;background:#d2d2d2"></div>
<div class="a" style="left:1081px;top:625px;width:1px;height:54px;background:#d2d2d2"></div>
<div class="t lbl" style="left:454px;top:631px;font-size:15px;color:#3265b5">Zkratka</div>
<div class="t lbl" style="left:670px;top:631px;font-size:15px;color:#3265b5">Název role</div>
<div class="t lbl" style="left:1089px;top:631px;font-size:15px;color:#3265b5">Režim zastupitelnosti</div>
<div class="t" style="left:454px;top:660px;font-size:14.5px">DOV_VYR_ZAD</div>
<div class="t" style="left:670px;top:659px;font-size:16px">Zadání dovolené - výroba</div>
<div class="t" style="left:1089px;top:659px;font-size:16px">Nenastaveno</div>
<!-- grid footer -->
<div class="a" style="left:412px;top:842px;width:1096px;height:32px;background:#efefef;border-top:1px solid #a3def8"></div>
<div class="a" style="left:412px;top:846px;width:1px;height:24px;background:#c8c8c8"></div>
<svg style="left:419px;top:848px" width="21" height="21" viewBox="0 0 21 21"><path d="M10.5 1.5 V19.5 M2.7 6 L18.3 15 M2.7 15 L18.3 6" stroke="#1f5aa6" stroke-width="4.2" stroke-linecap="square"/><path d="M10.5 1.5 V19.5 M2.7 6 L18.3 15 M2.7 15 L18.3 6" stroke="#efefef" stroke-width="1.3" stroke-linecap="round"/></svg>
<div class="t" style="left:450px;top:851px;font-size:14.5px;color:#1f5aa6">0</div>
<div class="a" style="left:466px;top:846px;width:1px;height:25px;background:#cdcdcd"></div>
<div class="t" style="left:475px;top:851px;font-size:14.5px;color:#1f4c9c">Počet záznamů: 1/1</div>
<div class="a" style="left:613px;top:846px;width:1px;height:24px;background:#c8c8c8"></div>
<div class="a" style="left:1413px;top:846px;width:1px;height:25px;background:#c8c8c8"></div>
<div class="a" style="left:1445px;top:846px;width:1px;height:25px;background:#c8c8c8"></div>
<svg style="left:1420px;top:849px" width="18" height="18" viewBox="0 0 18 18"><path d="M16.5 1.3 H1.5 L9 8.5 L1.5 15.8 H17" fill="none" stroke="#1f5aa6" stroke-width="1.6" stroke-linejoin="miter"/></svg>
<svg style="left:1453px;top:849px" width="20" height="20" viewBox="0 0 20 20"><path d="M1.5 18 L3 13 L14.5 1.5 A2 2 0 0 1 18 5 L6.5 16.5 Z M12.5 3.5 L16 7" fill="none" stroke="#1f5aa6" stroke-width="1.5"/><path d="M9 18.5 H18" stroke="#1f5aa6" stroke-width="1.5"/></svg>
<svg style="left:1480px;top:847px" width="26" height="26" viewBox="0 0 26 26"><rect x="1" y="1" width="16" height="16" fill="#d9e6f4" stroke="#1f5aa6" stroke-width="1.5"/><rect x="4" y="4" width="16" height="15" fill="#e8eef5" stroke="#1f5aa6" stroke-width="1.5"/><path d="M9 7.5 H18 M9 10.5 H18 M9 13.5 H13" stroke="#3f76b9" stroke-width="1.2"/><path d="M6.5 7.5 H7.5 M6.5 10.5 H7.5 M6.5 13.5 H7.5" stroke="#3f76b9" stroke-width="1.2"/><circle cx="18" cy="17.5" r="5.6" fill="#eef2f6" stroke="#1f5aa6" stroke-width="1.5"/><path d="M18 14.5 V20.5 M15 17.5 H21" stroke="#1f5aa6" stroke-width="1.7"/></svg>

</body></html>
